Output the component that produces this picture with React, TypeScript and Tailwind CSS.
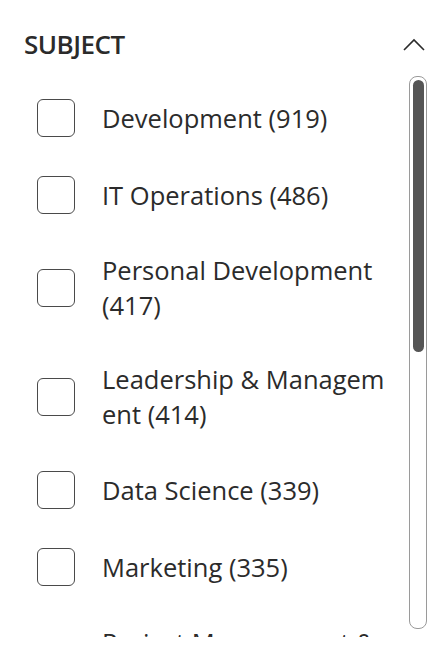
import React from "react";

const items: string[][] = [
  ["Development (919)"],
  ["IT Operations (486)"],
  ["Personal Development", "(417)"],
  ["Leadership & Managem", "ent (414)"],
  ["Data Science (339)"],
  ["Marketing (335)"],
  ["Project Management &", "Agile (296)"],
];

function Checkbox() {
  return <div className="w-[38px] h-[38px] shrink-0 rounded-[6px] border-[1.5px] border-[#4a4a4a] bg-white" />;
}

export default function App() {
  return (
    <div
      className="w-[446px] h-[648px] overflow-hidden bg-white text-[#2b2b2b]"
      style={{ fontFamily: '"Open Sans", "Noto Sans", sans-serif' }}
    >
      <div className="flex items-center justify-between pl-[24px] pr-[20px] pt-[27px] h-[61px]">
        <div className="text-[26px] leading-[34px] font-semibold tracking-[-0.5px] text-[#2b2b2b]">SUBJECT</div>
        <svg width="22" height="13" viewBox="0 0 22 13" className="mr-[1px]">
          <polyline points="1,12 11,2 21,12" fill="none" stroke="#2b2b2b" strokeWidth="1.6" />
        </svg>
      </div>
      <div className="flex mt-[15px]">
        <div className="flex-1 h-[561px] overflow-hidden">
          <div className="flex flex-col gap-[39px] pt-[23px] pl-[37px]">
            {items.map((lines, i) => (
              <div key={i} className="flex items-center gap-[27px]">
                <Checkbox />
                <div className="text-[25.5px] leading-[35px] text-[#2b2b2b]">
                  {lines.map((l, j) => (
                    <div key={j} className="whitespace-nowrap">{l}</div>
                  ))}
                </div>
              </div>
            ))}
          </div>
        </div>
        <div className="w-[18px] h-[553px] mr-[19px] shrink-0 rounded-[8px] border border-[#9a9a9a] pt-[3px] flex justify-center">
          <div className="w-[11px] h-[272px] rounded-full bg-[#555555]" />
        </div>
      </div>
    </div>
  );
}
